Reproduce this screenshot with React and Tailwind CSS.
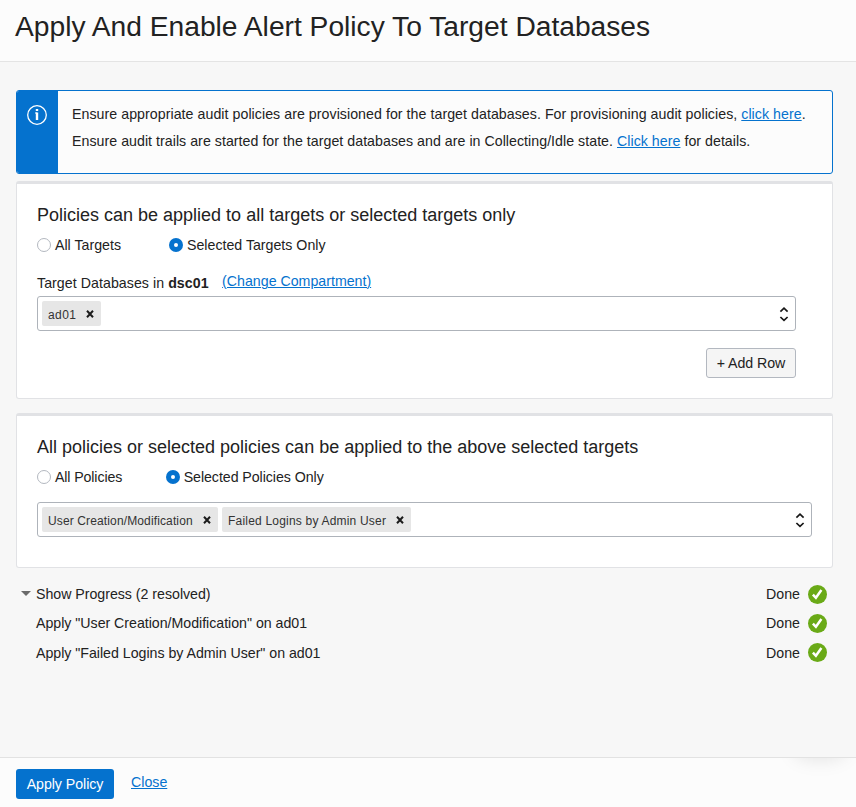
function Link({ children }) {
  return (
    <a className="text-[#0572ce] underline decoration-1 underline-offset-1" href="#">
      {children}
    </a>
  );
}

function Radio({ label, checked, tracking = "" }) {
  return (
    <label className="flex h-5 items-center gap-1 whitespace-nowrap">
      {checked ? (
        <span className="flex size-3.5 items-center justify-center rounded-full bg-[#0572ce]">
          <span className="size-1 rounded-full bg-white" />
        </span>
      ) : (
        <span className="size-3.5 rounded-full border border-[#b3b8c0] bg-white" />
      )}
      <span className={tracking}>{label}</span>
    </label>
  );
}

function Chip({ label, width, tracking }) {
  return (
    <span className={`flex h-[25px] items-center justify-between rounded-xs bg-[#e6e6e6] pt-0.5 pr-[7px] pl-1.5 text-[12px] leading-6 whitespace-nowrap text-[#333] ${width}`}>
      <span className={tracking}>{label}</span>
      <svg className="mb-px size-2" viewBox="0 0 8 8" fill="none" stroke="#1c1c1c" strokeWidth="2">
        <path d="M1 0.8 7 7.2M7 0.8 1 7.2" />
      </svg>
    </span>
  );
}

function Select({ children }) {
  return (
    <div className="flex h-[35px] items-center gap-1 rounded-[3px] border border-[#aeb3ba] bg-white pr-1.5 pl-1">
      {children}
      <svg className="ml-auto h-4 w-2.5" viewBox="0 0 10 16" fill="none" stroke="#161616" strokeWidth="1.7">
        <path d="M1.4 5.6 5 2.2 8.6 5.6M1.4 11 5 14.4 8.6 11" />
      </svg>
    </div>
  );
}

function ProgressRow({ children, arrow, height, iconTop }) {
  return (
    <div className={`flex items-start pr-1.5 pl-[5px] ${height}`}>
      <span className="flex h-5 w-[15px] items-center">
        {arrow && (
          <svg className="mb-px h-[5px] w-2.5" viewBox="0 0 10 5">
            <path d="M0 0H10L5 5Z" fill="#6b6b6b" />
          </svg>
        )}
      </span>
      <span className="tracking-[-0.02px]">{children}</span>
      <span className="ml-auto">Done</span>
      <svg className={`ml-2 size-[19px] ${iconTop}`} viewBox="0 0 19 19">
        <circle cx="9.5" cy="9.5" r="9.5" fill="#6aaa17" />
        <path d="M4.9 9.6 7.9 12.8 13.4 5" fill="none" stroke="#fff" strokeWidth="2.5" />
      </svg>
    </div>
  );
}

export default function App() {
  return (
    <div className="flex h-[807px] w-[856px] flex-col overflow-hidden bg-[#f7f7f7] font-['Liberation_Sans',Arial,sans-serif] text-[14.2px] leading-5 text-[#222]">
      <header className="h-[62px] border-b border-[#e4e4e4] bg-[#fcfcfc] pt-2 pl-4">
        <h1 className="-ml-px text-[28.2px] leading-9 whitespace-nowrap">Apply And Enable Alert Policy To Target Databases</h1>
      </header>

      <main className="flex-1 pt-7 pr-[23px] pl-4">
        <div className="flex h-[84px] overflow-hidden rounded-[3px] border border-[#0572ce] bg-[#fcfcfc]">
          <div className="w-[41px] bg-[#0572ce] pt-3.5 pl-2.5">
            <svg className="size-5" viewBox="0 0 20 20" fill="none" stroke="#fff">
              <circle cx="10" cy="10" r="9.3" strokeWidth="1.3" />
              <path d="M10 4V6M10 7.5V15" strokeWidth="2.4" />
              <path d="M8 8H10" strokeWidth="1" />
            </svg>
          </div>
          <div className="pt-2.5 pl-3.5 leading-[27px] tracking-[0.048px] whitespace-nowrap">
            <p>
              Ensure appropriate audit policies are provisioned for the target databases. For provisioning audit policies, <Link>click here</Link>.
            </p>
            <p className="tracking-[0.035px]">
              Ensure audit trails are started for the target databases and are in Collecting/Idle state. <Link>Click here</Link> for details.
            </p>
          </div>
        </div>

        <section className="mt-[7px] h-[218px] rounded-[3px] border border-t-3 border-[#e1e2e5] bg-white pt-[19px] pr-9 pl-5">
          <h2 className="text-[18px] leading-6">Policies can be applied to all targets or selected targets only</h2>
          <div className="mt-2 flex gap-12">
            <Radio label="All Targets" />
            <Radio label="Selected Targets Only" checked />
          </div>
          <div className="mt-[18px] mb-[3px] flex h-5 gap-[13.5px]">
            <span className="tracking-[0.05px]">
              Target Databases in <b>dsc01</b>
            </span>
            <span className="-mt-0.5"><Link>(Change Compartment)</Link></span>
          </div>
          <Select>
            <Chip label="ad01" width="w-[59px]" tracking="tracking-[0.4px]" />
          </Select>
          <div className="mt-[17px] flex justify-end">
            <button className="h-[30px] w-[90px] rounded-[3px] border border-[#b3b8c0] bg-[#f5f5f5] tracking-[-0.05px] whitespace-nowrap">+ Add Row</button>
          </div>
        </section>

        <section className="mt-3.5 h-[155px] rounded-[3px] border border-t-3 border-[#e1e2e5] bg-white pt-[19px] pr-5 pl-5">
          <h2 className="text-[18px] leading-6">All policies or selected policies can be applied to the above selected targets</h2>
          <div className="mt-2 mb-[15px] flex gap-[43.5px]">
            <Radio label="All Policies" tracking="tracking-[-0.12px]" />
            <Radio label="Selected Policies Only" checked tracking="tracking-[-0.05px]" />
          </div>
          <Select>
            <Chip label="User Creation/Modification" width="w-[176px]" tracking="tracking-[0.13px]" />
            <Chip label="Failed Logins by Admin User" width="w-[189px]" tracking="tracking-[0.2px]" />
          </Select>
        </section>

        <div className="pt-4">
          <ProgressRow arrow height="h-[29px]" iconTop="mt-px">Show Progress (2 resolved)</ProgressRow>
          <ProgressRow height="h-[30px]" iconTop="mt-px">Apply "User Creation/Modification" on ad01</ProgressRow>
          <ProgressRow height="h-[29px]" iconTop="mt-0">Apply "Failed Logins by Admin User" on ad01</ProgressRow>
        </div>
      </main>

      <footer className="relative flex h-[50px] items-start gap-[17px] overflow-hidden border-t border-[#e2e2e2] bg-[#fcfcfc] pt-[11px] pl-4">
        <button className="h-[30px] w-[98px] rounded-[3px] bg-[#0572ce] tracking-[-0.05px] whitespace-nowrap text-white">Apply Policy</button>
        <span className="mt-[3px]"><Link>Close</Link></span>
        <div className="absolute -top-5 right-2 h-6 w-14 rounded-[50%] bg-black/8 blur-[8px]" />
      </footer>
    </div>
  );
}
